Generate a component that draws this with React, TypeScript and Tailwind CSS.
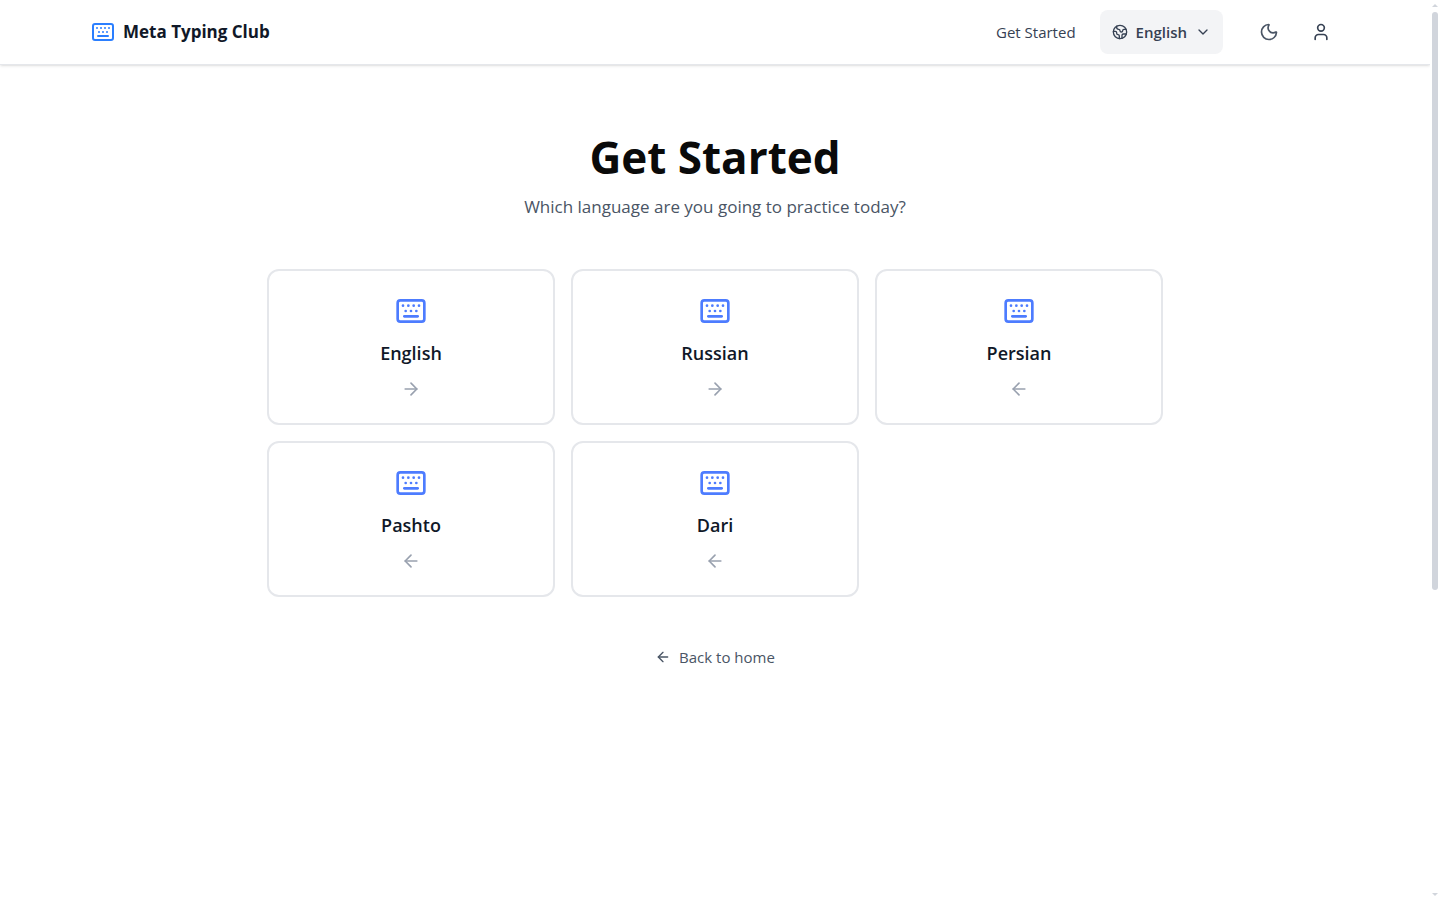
import React from 'react';
import { ArrowLeft, ArrowRight, ChevronDown, Earth, Keyboard, Moon, User } from 'lucide-react';

const languages = [
  { name: 'English', rtl: false },
  { name: 'Russian', rtl: false },
  { name: 'Persian', rtl: true },
  { name: 'Pashto', rtl: true },
  { name: 'Dari', rtl: true },
];

const Navbar = () => {
  return (
    <header className="bg-white border-b border-gray-200 shadow-sm">
      <div className="max-w-7xl mx-auto px-4 h-16 flex items-center justify-between">
        {/* Logo */}
        <a href="#home" className="flex items-center gap-2">
          <Keyboard size={24} className="text-[#2b7fff]" />
          <span className="text-[17px] leading-7 font-bold text-gray-900">Meta Typing Club</span>
        </a>

        {/* Navigation */}
        <nav className="flex items-center">
          <a href="#get-started" className="text-[15px] text-gray-700 mr-6">
            Get Started
          </a>
          <button className="flex items-center gap-2 h-11 px-3 mr-6 rounded-lg bg-gray-100 text-[15px] font-semibold text-gray-700">
            <Earth size={16} />
            English
            <ChevronDown size={16} />
          </button>
          <button aria-label="Toggle theme" className="p-3 mr-3 text-gray-600">
            <Moon size={20} />
          </button>
          <button aria-label="Account" className="p-2 text-gray-700">
            <User size={20} />
          </button>
        </nav>
      </div>
    </header>
  );
};

const LanguageCard = ({ name, rtl }: { name: string; rtl: boolean }) => {
  const Arrow = rtl ? ArrowLeft : ArrowRight;

  return (
    <a
      href={`#${name.toLowerCase()}`}
      className="flex flex-col items-center gap-3 p-6 rounded-xl border-2 border-gray-200 bg-white"
    >
      <Keyboard size={32} className="text-[#4d7cff]" />
      <span className="text-lg leading-7 font-semibold text-gray-900">{name}</span>
      <Arrow size={20} className="text-gray-400" />
    </a>
  );
};

const ScrollTrack = () => {
  return (
    <div aria-hidden="true" className="w-[10px] h-screen shrink-0 flex flex-col items-start pl-[2px] py-1">
      <svg width="6" height="3" viewBox="0 0 6 3" className="fill-gray-300">
        <path d="M0 3L3 0L6 3Z" />
      </svg>
      <div className="w-[6px] h-[578px] mt-[5px] rounded-full bg-gray-300" />
      <svg width="6" height="3" viewBox="0 0 6 3" className="mt-auto fill-gray-300">
        <path d="M0 0L3 3L6 0Z" />
      </svg>
    </div>
  );
};

const App = () => {
  return (
    <div className="flex min-h-screen bg-white font-['Segoe_UI','Open_Sans',sans-serif]">
      <div className="flex-1 overflow-x-clip">
        <Navbar />
        <main className="max-w-4xl mx-auto pt-16 text-center">
          <h1 className="text-[44px] leading-[56px] font-bold text-neutral-950">Get Started</h1>
          <p className="mt-2 text-[17px] leading-7 text-gray-600">Which language are you going to practice today?</p>

          {/* Languages */}
          <div className="grid grid-cols-3 gap-4 mt-12">
            {languages.map((language) => (
              <LanguageCard key={language.name} name={language.name} rtl={language.rtl} />
            ))}
          </div>

          <a href="#home" className="inline-flex items-center gap-2 mt-12 text-[15px] leading-6 text-gray-600">
            <ArrowLeft size={16} />
            Back to home
          </a>
        </main>
      </div>
      <ScrollTrack />
    </div>
  );
};

export default App;
